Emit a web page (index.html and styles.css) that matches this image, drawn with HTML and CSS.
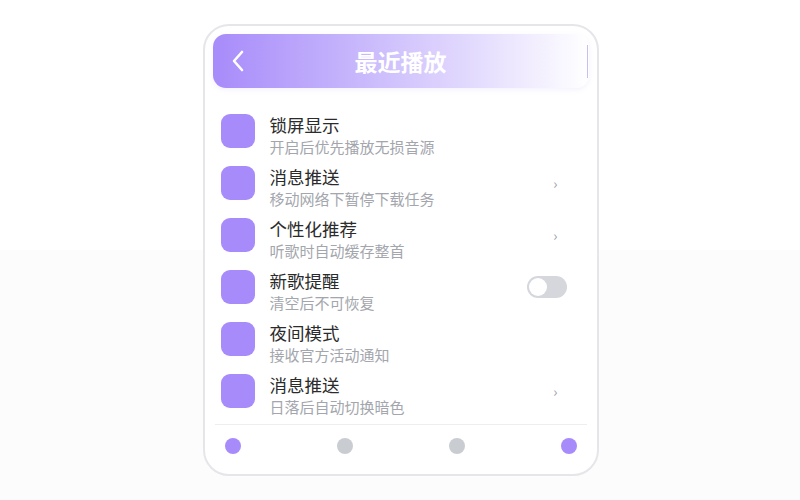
FILE: index.html
```html
<!DOCTYPE html>
<html lang="zh-CN">
<head>
<meta charset="UTF-8">
<meta name="viewport" content="width=device-width, initial-scale=1.0">
<title>最近播放</title>
<link rel="stylesheet" href="styles.css">
</head>
<body>

<div class="phone">
    <header class="topbar">
        <button class="back" aria-label="返回">
            <svg width="14" height="22" viewBox="0 0 14 22"><path d="M11 2 L3 11 L11 20" fill="none" stroke="#fff" stroke-width="2.6" stroke-linecap="round" stroke-linejoin="round"/></svg>
        </button>
        <h1>最近播放</h1>
        <span class="edge"></span>
    </header>

    <ul class="settings">
        <li class="row">
            <span class="icon"></span>
            <div class="text">
                <div class="title">锁屏显示</div>
                <div class="sub">开启后优先播放无损音源</div>
            </div>
        </li>
        <li class="row">
            <span class="icon"></span>
            <div class="text">
                <div class="title">消息推送</div>
                <div class="sub">移动网络下暂停下载任务</div>
            </div>
            <span class="chev">›</span>
        </li>
        <li class="row">
            <span class="icon"></span>
            <div class="text">
                <div class="title">个性化推荐</div>
                <div class="sub">听歌时自动缓存整首</div>
            </div>
            <span class="chev">›</span>
        </li>
        <li class="row">
            <span class="icon"></span>
            <div class="text">
                <div class="title">新歌提醒</div>
                <div class="sub">清空后不可恢复</div>
            </div>
            <span class="toggle"><span class="knob"></span></span>
        </li>
        <li class="row">
            <span class="icon"></span>
            <div class="text">
                <div class="title">夜间模式</div>
                <div class="sub">接收官方活动通知</div>
            </div>
        </li>
        <li class="row">
            <span class="icon"></span>
            <div class="text">
                <div class="title">消息推送</div>
                <div class="sub">日落后自动切换暗色</div>
            </div>
            <span class="chev">›</span>
        </li>
    </ul>

    <footer class="dots">
        <span class="dot on"></span>
        <span class="dot"></span>
        <span class="dot"></span>
        <span class="dot on"></span>
    </footer>
</div>

</body>
</html>
```

FILE: styles.css
```css
html { background: linear-gradient(to bottom, #fff 50%, #fcfcfd 50%); min-height: 100%; }
body { margin: 0; padding: 24px 0 0 1px; font-family: "Noto Sans CJK SC", "Noto Sans", sans-serif; color: #333; }

.phone { width: 392px; height: 448px; margin: 0 auto; border: 2px solid #e6e6ea; border-radius: 26px; background: #fff; display: flex; flex-direction: column; }

.topbar { position: relative; margin: 8px 8px 0; height: 54px; border-radius: 13px; background: linear-gradient(to right, #a78bfa, #c9b9fc 40%, #fff 100%); display: flex; align-items: center; justify-content: center; box-shadow: 0 2px 5px rgba(167, 139, 250, 0.12); }
.topbar h1 { margin: 0; font-size: 23px; font-weight: 700; color: #fff; }
.back { position: absolute; left: 18px; top: 16px; background: none; border: none; padding: 0; display: flex; cursor: pointer; }
.edge { position: absolute; right: 1px; top: 11px; width: 1px; height: 33px; background: #c9bdf5; }

.settings { list-style: none; margin: 17px 8px 0; padding: 0 8px; }
.row { height: 52px; display: flex; align-items: center; }
.icon { width: 34px; height: 34px; border-radius: 9px; background: #a78bfa; flex: none; }
.text { flex: 1; margin: 8px 0 0 15px; }
.title { font-size: 17.5px; line-height: 23px; color: #2b2b2b; }
.sub { font-size: 15px; line-height: 21px; color: #a3a6ad; }
.chev { color: #9a9da4; font-size: 14px; margin-right: 23px; }
.toggle { width: 40px; height: 22px; border-radius: 11px; background: #d5d7dd; margin-right: 14px; display: flex; align-items: center; padding-left: 2px; box-sizing: border-box; }
.knob { width: 18px; height: 18px; border-radius: 50%; background: #fff; }

.dots { margin: 7px 10px 0; border-top: 1px solid #eeeef0; padding: 13px 10px 0; display: flex; justify-content: space-between; }
.dot { width: 16px; height: 16px; border-radius: 50%; background: #c9ccd1; }
.dot.on { background: #a78bfa; }
```
